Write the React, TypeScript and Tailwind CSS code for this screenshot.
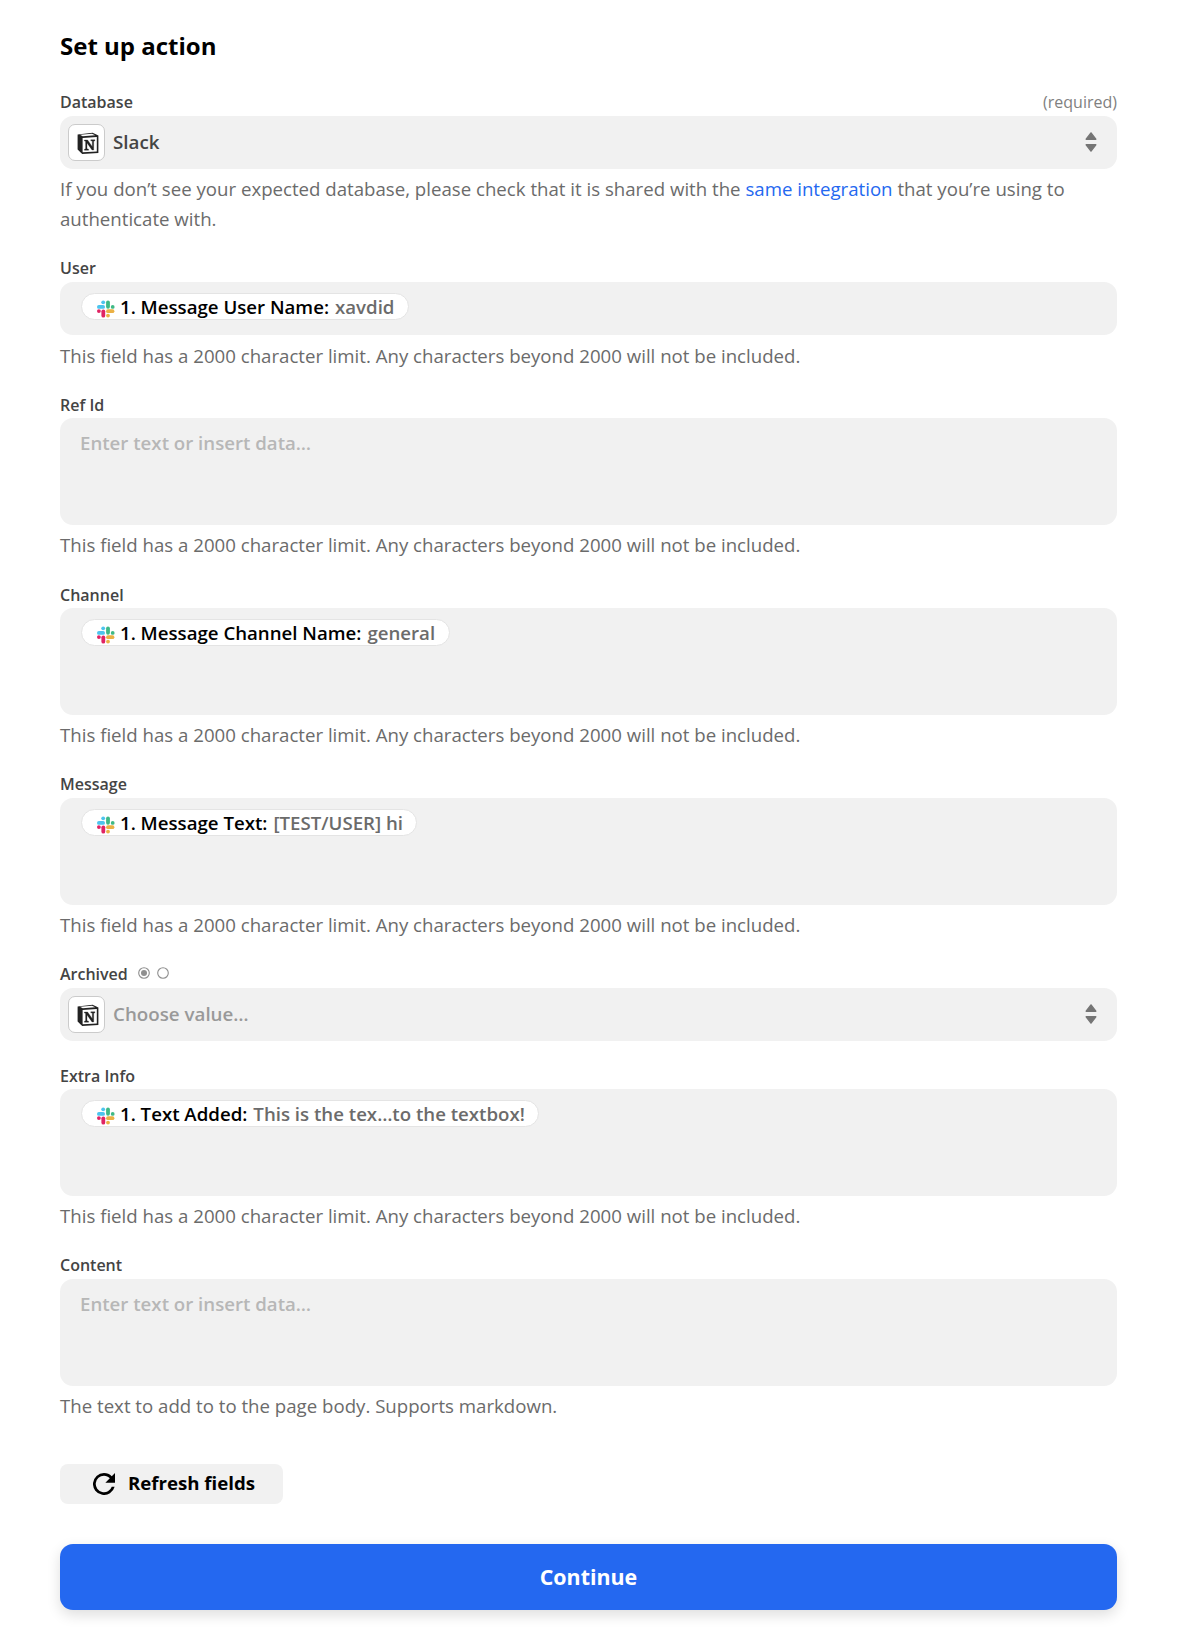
import React from "react";

function Slack() {
  return (
    <svg className="mt-[5px] mr-[5px] h-[18px] w-[19px] shrink-0" viewBox="0 0 19 18">
      <g fill="#4cc4ee"><circle cx="7.2" cy="2.3" r="1.9" /><rect x="1" y="5" width="8" height="3.8" rx="1.9" /></g>
      <g fill="#3fb985"><rect x="10.1" y="0.4" width="3.8" height="8.3" rx="1.9" /><circle cx="16.7" cy="6.9" r="1.9" /></g>
      <g fill="#e02363"><circle cx="2.9" cy="11.1" r="1.9" /><rect x="5.4" y="9.4" width="3.8" height="8.2" rx="1.9" /></g>
      <g fill="#ebb144"><rect x="10.1" y="9.3" width="8.3" height="3.8" rx="1.9" /><circle cx="12" cy="15.6" r="1.9" /></g>
    </svg>
  );
}

function Notion() {
  return (
    <span className="flex size-[37px] items-center justify-center rounded-[7px] border border-[#cbcbcb] bg-white">
      <svg className="ml-[3px] size-[22px]" viewBox="0 0 22 22">
        <path d="M.6 2.4 15.6.8 21.4 3.6V21L5.2 22 .6 17.6z" fill="#222" />
        <path d="M3 2.8 15 1.8 18.2 3.3 5.7 4.2z" fill="#fff" />
        <path d="M5.6 6 19.8 5.1V19.4L5.6 20.3z" fill="#fff" />
        <path d="M7.4 8h3.2l4.7 6.7V9.1l-1.5-.3v-1h4.1v1l-1.2.4v8.8h-1.7l-5-7.1v5.9l1.6.4v1H7.4v-1l1.2-.4V9.3l-1.2-.3z" fill="#222" stroke="#222" strokeWidth=".3" />
      </svg>
    </span>
  );
}

function Label({ text, top, tall, children }: { text: string; top: string; tall?: boolean; children?: React.ReactNode }) {
  return (
    <div className={`flex h-6 items-center text-base leading-6 font-semibold text-[#444] ${top} ${tall ? "mb-px" : "mb-0.5"}`}>
      <span>{text}</span>{children}
    </div>
  );
}

function Select({ text, color }: { text: string; color: string }) {
  return (
    <div className="flex h-[53px] items-center rounded-[13px] bg-[#f1f1f1] pr-5 pl-2">
      <Notion />
      <span className={`ml-2 text-[18.75px] font-semibold ${color}`}>{text}</span>
      <svg className="mb-px ml-auto h-5 w-[12px]" viewBox="0 0 12 20" fill="#757575" stroke="#757575" strokeWidth="1.4" strokeLinejoin="round"><path d="M6 .9 10.8 7.2H1.2zM1.2 12.8h9.6L6 19.1z" /></svg>
    </div>
  );
}

function Field({ short, name, value }: { short?: boolean; name?: string; value?: string }) {
  return (
    <div className={`flex items-start rounded-[13px] bg-[#f1f1f1] px-5 pt-[11px] ${short ? "h-[53px]" : "h-[107px]"}`}>
      {name ? (
        <span className="ml-px flex h-[27px] items-center rounded-full border border-[#e4e4e4] bg-white pr-[13.5px] pl-[14px] text-[18.65px] font-semibold">
          <Slack /><span>{name}</span><span className="ml-1.5 text-[#6b6b6b]">{value}</span>
        </span>
      ) : (
        <span className="text-[18.65px] leading-[28px] font-semibold text-[#b7b7b7]">Enter text or insert data…</span>
      )}
    </div>
  );
}

function Help({ low, children }: { low?: boolean; children?: React.ReactNode }) {
  return (
    <p className={`mt-[5px] text-[18.65px] leading-[30px] text-[#6b6b6b] ${low ? "pt-px" : "pb-px"}`}>
      {children ?? "This field has a 2000 character limit. Any characters beyond 2000 will not be included."}
    </p>
  );
}

export default function App() {
  return (
    <main className="h-[1634px] w-[1178px] overflow-hidden bg-white pt-7 pr-[61px] pl-[60px] font-['Open_Sans',sans-serif] text-black">
      <h1 className="h-9 text-2xl leading-9 font-bold">Set up action</h1>
      <Label text="Database" top="mt-[26px]"><span className="ml-auto font-normal text-[#808080]">(required)</span></Label>
      <Select text="Slack" color="text-[#444]" />
      <Help>If you don’t see your expected database, please check that it is shared with the <a className="text-[#2468f0]">same integration</a> that you’re using to authenticate with.</Help>
      <Label text="User" top="mt-[21px]" />
      <Field short name="1. Message User Name:" value="xavdid" />
      <Help low />
      <Label text="Ref Id" top="mt-[22px]" tall />
      <Field />
      <Help />
      <Label text="Channel" top="mt-[22px]" tall />
      <Field name="1. Message Channel Name:" value="general" />
      <Help />
      <Label text="Message" top="mt-[21px]" />
      <Field name="1. Message Text:" value="[TEST/USER] hi" />
      <Help />
      <Label text="Archived" top="mt-[21px]">
        <svg className="mb-0.5 ml-[10px] h-3 w-[31px]" viewBox="0 0 31 12" fill="none" stroke="#8f8f8f" strokeWidth="1.1"><circle cx="6" cy="6" r="5.3" /><circle cx="6" cy="6" r="3" fill="#8f8f8f" stroke="none" /><circle cx="25" cy="6" r="5.3" /></svg>
      </Label>
      <Select text="Choose value…" color="text-[#999]" />
      <Label text="Extra Info" top="mt-[23px]" tall />
      <Field name="1. Text Added:" value="This is the tex…to the textbox!" />
      <Help />
      <Label text="Content" top="mt-[21px]" />
      <Field />
      <Help>The text to add to to the page body. Supports markdown.</Help>
      <button className="mt-[42px] flex h-10 w-[223px] items-center rounded-lg bg-[#f1f1f1] pl-[33px] text-[18.65px] font-bold">
        <svg className="mr-[13px] size-[22px]" viewBox="4 4 16 16"><path d="M17.65 6.35A7.96 7.96 0 0 0 12 4a8 8 0 1 0 7.73 10h-2.08A6 6 0 1 1 12 6c1.66 0 3.14.69 4.22 1.78L13 11h7V4z" /></svg>
        <span className="pb-0.5">Refresh fields</span>
      </button>
      <button className="mt-10 h-[66px] w-full rounded-[13px] bg-[#2468f0] text-[21.4px] font-bold text-white shadow-[0_5px_14px_#00000022]">Continue</button>
    </main>
  );
}
